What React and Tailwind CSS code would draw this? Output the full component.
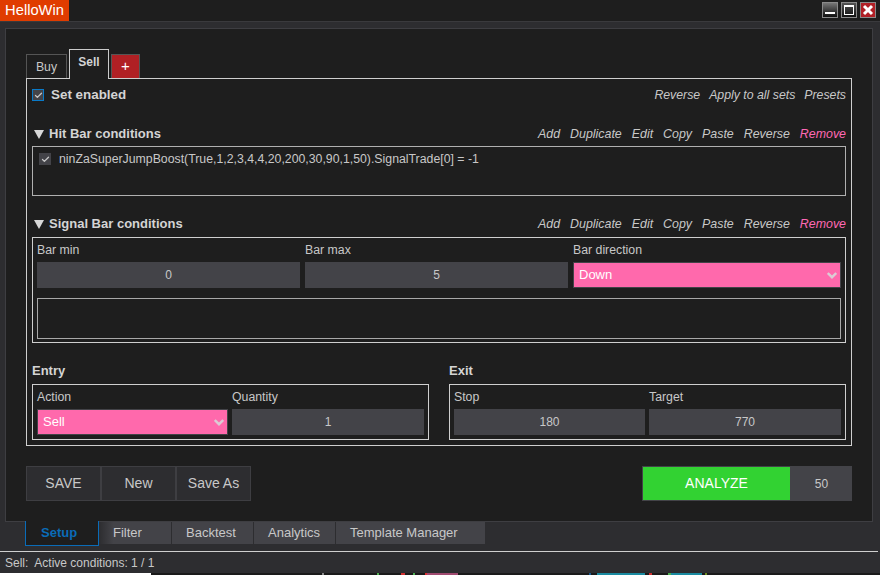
import { Check } from 'lucide-react'

const font = { fontFamily: '"Liberation Sans", Arial, sans-serif' }

function Actions({ items, className = '' }) {
  return (
    <div className={`flex italic text-[#c8c8c8] ${className}`}>
      {items.map((t) => (
        <span key={t} className={t === 'Remove' ? 'text-[#ff69b4]' : ''}>
          {t}
        </span>
      ))}
    </div>
  )
}

const condActions = ['Add', 'Duplicate', 'Edit', 'Copy', 'Paste', 'Reverse', 'Remove']

function SectionHead({ title, className = '' }) {
  return (
    <div className={`flex h-[16px] items-center justify-between ${className}`}>
      <div className="flex items-center gap-[5px] text-[13px] font-bold text-[#d4d4d4]">
        <svg width="10" height="9" viewBox="0 0 10 9" className="ml-[2px]">
          <path d="M0 0H10L5 9Z" fill="#d8d8d8" />
        </svg>
        {title}
      </div>
      <Actions items={condActions} className="gap-[10px] text-[12.4px]" />
    </div>
  )
}

function Label({ children }) {
  return <div className="h-[19px] text-[12.3px] leading-[14px] text-[#c8c8c8]">{children}</div>
}

function Field({ label, value, className = '' }) {
  return (
    <div className={className}>
      <Label>{label}</Label>
      <div className="flex h-[26px] items-center justify-center bg-[#434348] text-[12px] text-[#c8c8c8]">
        {value}
      </div>
    </div>
  )
}

function PinkSelect({ label, value, className = '' }) {
  return (
    <div className={className}>
      <Label>{label}</Label>
      <div className="flex h-[26px] items-center justify-between border border-[#434348] bg-[#ff69ac] pl-[5px] pr-[3px] text-[13px] text-white">
        {value}
        <svg width="10" height="7" viewBox="0 0 10 7" fill="none">
          <path d="M0.8 1L5 5.2L9.2 1" stroke="#dccbd4" strokeWidth="2.4" />
        </svg>
      </div>
    </div>
  )
}

function Tick({ className = '' }) {
  return (
    <span className={`flex h-[12px] w-[12px] shrink-0 items-center justify-center bg-[#434348] ${className}`}>
      <Check size={9} strokeWidth={3.5} className="text-[#c8c8c8]" />
    </span>
  )
}

function WinBtn({ children, className = '' }) {
  return (
    <div
      className={`flex h-[16px] w-[16px] items-center justify-center border border-[#8a8a8a] ${className}`}
    >
      {children}
    </div>
  )
}

const bottomTabs = [
  ['Backtest', 'w-[81px]'],
  ['Analytics', 'w-[81px]'],
  ['Template Manager', 'w-[149px]'],
]

// bits of the window behind this one, along the bottom edge
const behind = [
  'ml-[171px] w-[2px] bg-[#8a8a8a]',
  'ml-[53px] w-[2px] bg-[#4caf50]',
  'ml-[22px] w-[4px] bg-[#d03030]',
  'ml-[8px] w-[2px] bg-[#4caf50]',
  'ml-[10px] w-[2px] bg-[#e03030]',
  'w-[31px] bg-[#a04a70]',
  'ml-[131px] w-[2px] bg-[#1a5a90]',
  'ml-[6px] w-[48px] bg-[#1a8aa0]',
  'ml-[4px] w-[3px] bg-[#d03030]',
  'ml-[16px] w-[3px] bg-[#4caf50]',
  'w-[31px] bg-[#1a8aa0]',
  'ml-[3px] w-[2px] bg-[#6a8a20]',
]

export default function App() {
  return (
    <div style={font} className="flex h-[575px] w-[880px] flex-col overflow-hidden bg-[#2d2d30]">
      {/* title bar */}
      <div className="flex h-[22px] shrink-0 items-start justify-between border-b border-[#3a3a3d] bg-[#1e1e1e]">
        <div className="flex h-[21px] w-[69px] items-center justify-center bg-[#e03c00] text-[14.7px] text-white">
          HelloWin
        </div>
        <div className="mr-[4px] mt-[2px] flex gap-[3px]">
          <WinBtn className="bg-gradient-to-b from-[#777] to-[#111]">
            <div className="mt-[6px] h-[2px] w-[10px] bg-white" />
          </WinBtn>
          <WinBtn className="bg-gradient-to-b from-[#555] to-[#111]">
            <div className="h-[10px] w-[10px] border border-t-2 border-white" />
          </WinBtn>
          <WinBtn className="bg-[#b02026]">
            <svg width="12" height="12" viewBox="0 0 12 12">
              <path d="M2 2L10 10M10 2L2 10" stroke="#fff" strokeWidth="3" />
            </svg>
          </WinBtn>
        </div>
      </div>

      {/* main panel */}
      <div className="ml-[5px] mt-[6px] flex h-[494px] w-[868px] shrink-0 flex-col border border-[#3e3e42] bg-[#1e1e1e] px-[20px]">
        {/* set tabs */}
        <div className="mt-[20px] flex h-[29px] shrink-0 items-end gap-[2px]">
          <div className="flex h-[24px] w-[41px] items-center justify-center border border-b-0 border-[#555] pt-[1px] text-[12.3px] text-[#c8c8c8]">
            Buy
          </div>
          <div className="relative top-[1px] flex h-[30px] w-[40px] justify-center border border-b-0 border-[#ccc] bg-[#1e1e1e] pt-[3px] text-[12px] font-bold text-[#d4d4d4]">
            Sell
          </div>
          <div className="flex h-[24px] w-[29px] items-center justify-center border border-b-0 border-[#555] bg-[#b02024] text-[15px] text-white">
            +
          </div>
        </div>

        {/* set content */}
        <div className="flex h-[368px] w-[826px] shrink-0 flex-col border border-[#cfcfcf] px-[5px]">
          <div className="mt-[10px] flex h-[12px] items-center justify-between">
            <div className="flex items-center gap-[7px] text-[13.4px] font-bold text-[#d4d4d4]">
              <Tick className="border border-[#0a7ac8]" />
              Set enabled
            </div>
            <Actions items={['Reverse', 'Apply to all sets', 'Presets']} className="gap-[9px] text-[12.3px]" />
          </div>

          <SectionHead title="Hit Bar conditions" className="mt-[25px]" />
          <div className="mt-[4px] h-[50px] border border-[#b0b0b0] px-[6px] pt-[6px]">
            <div className="flex h-[12px] items-center gap-[8px] text-[12.3px] text-[#c8c8c8]">
              <Tick />
              ninZaSuperJumpBoost(True,1,2,3,4,4,20,200,30,90,1,50).SignalTrade[0] = -1
            </div>
          </div>

          <SectionHead title="Signal Bar conditions" className="mt-[20px]" />
          <div className="mt-[5px] h-[106px] border border-[#cfcfcf] px-[4px] pt-[5px]">
            <div className="flex gap-[5px]">
              <Field label="Bar min" value="0" className="w-[263px]" />
              <Field label="Bar max" value="5" className="w-[263px]" />
              <PinkSelect label="Bar direction" value="Down" className="w-[268px]" />
            </div>
            <div className="mt-[10px] h-[41px] w-[804px] border border-[#a8a8a8]" />
          </div>

          {/* entry / exit */}
          <div className="mt-[20px] flex gap-[20px]">
            <div className="w-[397px]">
              <div className="h-[21px] text-[13px] font-bold leading-[15px] text-[#d4d4d4]">Entry</div>
              <div className="flex h-[56px] gap-[4px] border border-[#cfcfcf] px-[4px] pt-[5px]">
                <PinkSelect label="Action" value="Sell" className="w-[191px]" />
                <Field label="Quantity" value="1" className="w-[192px]" />
              </div>
            </div>
            <div className="w-[397px]">
              <div className="h-[21px] text-[13px] font-bold leading-[15px] text-[#d4d4d4]">Exit</div>
              <div className="flex h-[56px] gap-[4px] border border-[#cfcfcf] px-[4px] pt-[5px]">
                <Field label="Stop" value="180" className="w-[191px]" />
                <Field label="Target" value="770" className="w-[192px]" />
              </div>
            </div>
          </div>
        </div>

        {/* action buttons */}
        <div className="mt-[20px] flex h-[35px] shrink-0 justify-between">
          <div className="flex">
            {['SAVE', 'New', 'Save As'].map((t) => (
              <div
                key={t}
                className="flex w-[75px] items-center justify-center border border-[#3e3e42] bg-[#2d2d30] text-[14px] text-[#c8c8c8]"
              >
                {t}
              </div>
            ))}
          </div>
          <div className="flex">
            <div className="flex w-[149px] items-center justify-center border border-[#434348] bg-[#32d232] text-[14px] text-white">
              ANALYZE
            </div>
            <div className="flex w-[61px] items-center justify-center bg-[#434348] text-[12px] text-[#c8c8c8]">
              50
            </div>
          </div>
        </div>
      </div>

      {/* bottom tabs */}
      <div className="ml-[25px] flex h-[25px] shrink-0 items-start text-[13px] text-[#c8c8c8]">
        <div className="-mt-[1px] flex h-[25px] w-[74px] items-center border border-t-0 border-[#0a6cb8] bg-[#1e1e1e] pl-[15px] font-bold text-[#0a6cb8]">
          Setup
        </div>
        <div className="flex h-[22px] w-[72px] items-center bg-gradient-to-r from-[#2d2d30] to-[#434348] to-[20%] pl-[14px]">
          Filter
        </div>
        {bottomTabs.map(([t, w]) => (
          <div key={t} className={`ml-[1px] flex h-[22px] items-center bg-[#434348] pl-[14px] ${w}`}>
            {t}
          </div>
        ))}
      </div>

      {/* status bar */}
      <div className="mr-[2px] mt-[4px] h-[1px] shrink-0 bg-[#cfcfcf]" />
      <div className="flex h-[21px] shrink-0 items-center pl-[5px] text-[12px] text-[#c8c8c8]">
        Sell:&nbsp; Active conditions: 1 / 1
      </div>

      {/* what shows behind the window */}
      <div className="flex h-[2px] shrink-0 bg-[#1a1a1a]">
        <div className="w-[151px] bg-white" />
        {behind.map((c) => (
          <div key={c} className={c} />
        ))}
      </div>
    </div>
  )
}
